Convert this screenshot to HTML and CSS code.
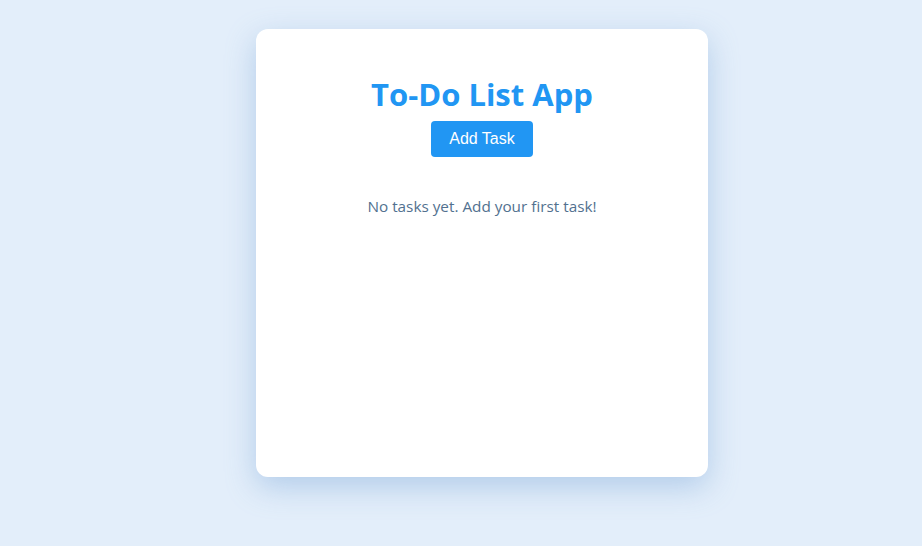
FILE: index.html
```html
<!DOCTYPE html>
<html>
<head>
<meta charset="utf-8">
<link rel="stylesheet" href="styles.css">
</head>
<body>
<div class="card">
  <h1 class="title">To-Do List App</h1>
  <button class="add-btn">Add Task</button>
  <p class="empty">No tasks yet. Add your first task!</p>
</div>
</body>
</html>
```
FILE: styles.css
```css
html, body {
  margin: 0;
  padding: 0;
}
body {
  background: #e3eefa;
  font-family: "Open Sans", "Noto Sans", sans-serif;
  height: 546px;
  overflow: hidden;
  padding-left: 42px;
  box-sizing: border-box;
}
.card {
  box-sizing: border-box;
  width: 452px;
  height: 448px;
  margin: 29px auto 0;
  background: #ffffff;
  border-radius: 12px;
  box-shadow: 0 10px 30px rgba(120, 165, 215, 0.45);
  display: flex;
  flex-direction: column;
  align-items: center;
  padding-top: 44px;
}
.title {
  margin: 0;
  color: #2196f3;
  font-size: 31px;
  font-weight: 700;
  line-height: 42px;
}
.add-btn {
  margin-top: 6px;
  width: 102px;
  height: 36px;
  border: none;
  border-radius: 4px;
  background: #2196f3;
  color: #ffffff;
  font-family: "Liberation Sans", Arial, sans-serif;
  font-size: 16px;
  padding: 0;
}
.empty {
  margin: 38px 0 0;
  color: #52718f;
  font-size: 15.3px;
  line-height: 22px;
}
```
